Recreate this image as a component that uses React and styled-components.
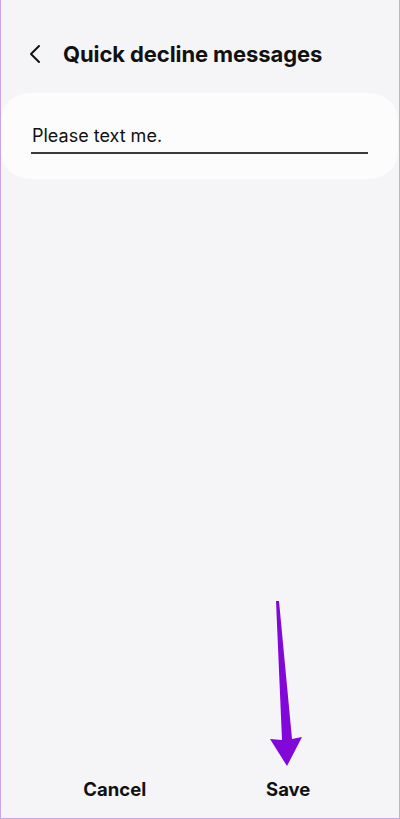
import React from 'react';
import styled, {createGlobalStyle} from 'styled-components';

const Global = createGlobalStyle`
    html, body {
        margin:0;
        padding:0;
        background:#f5f5f8;
    }
    * { box-sizing:border-box; }
`

const Screen = styled.div`
    position:relative;
    width:400px;
    height:819px;
    display:flex;
    flex-direction:column;
    background:#f5f5f8;
    border-left:1px solid #c9a6ec;
    border-right:1px solid #c9a6ec;
    border-bottom:1px solid #c9a6ec;
    font-family:Inter, "Noto Sans", "Liberation Sans", sans-serif;
    color:#111;
`

const Header = styled.div`
    display:flex;
    align-items:center;
    height:56px;
    margin-top:26px;
    padding-left:27px;
`

const Back = styled.button`
    border:0;
    background:none;
    padding:0;
    width:16px;
    height:20px;
    display:flex;
    align-items:center;
    margin-right:19px;
`

const Title = styled.h1`
    margin:0;
    font-size:22px;
    font-weight:700;
    letter-spacing:-0.1px;
`

const Card = styled.div`
    margin:11px 1px 0 0;
    height:86px;
    background:#fcfcfd;
    border-radius:28px;
    padding:32px 30px 0 30px;
`

const Field = styled.div`
    font-size:18px;
    line-height:22px;
    padding-left:1px;
    padding-bottom:5px;
    border-bottom:2px solid #3a3a3a;
`

const Spacer = styled.div`
    flex:1;
`

const BottomBar = styled.div`
    display:flex;
    height:58px;
`

const Action = styled.button`
    flex:1;
    border:0;
    background:none;
    font-family:inherit;
    font-size:18.5px;
    font-weight:700;
    color:#111;
    padding:0 ${p => p.right || 0}px 0 ${p => p.left || 0}px;
    height:58px;
`

const Arrow = styled.svg`
    position:absolute;
    left:262px;
    top:598px;
`

const App = () => {
    return (
        <>
            <Global />
            <Screen>
                <Header>
                    <Back aria-label="back">
                        <svg width="13" height="20" viewBox="0 0 13 20">
                            <path d="M11 2 L3 10 L11 18" fill="none" stroke="#111" strokeWidth="2" strokeLinecap="round" strokeLinejoin="round" />
                        </svg>
                    </Back>
                    <Title>Quick decline messages</Title>
                </Header>
                <Card>
                    <Field>Please text me.</Field>
                </Card>
                <Spacer />
                <BottomBar>
                    <Action left={27}>Cancel</Action>
                    <Action right={24}>Save</Action>
                </BottomBar>
                <Arrow width="44" height="172" viewBox="0 0 44 172">
                    <path d="M13 3 L16 3 L29 141 L39 139 L24 168 L7 141 L19 142 Z" fill="#8108d9" />
                </Arrow>
            </Screen>
        </>
    )
}

export default App;
